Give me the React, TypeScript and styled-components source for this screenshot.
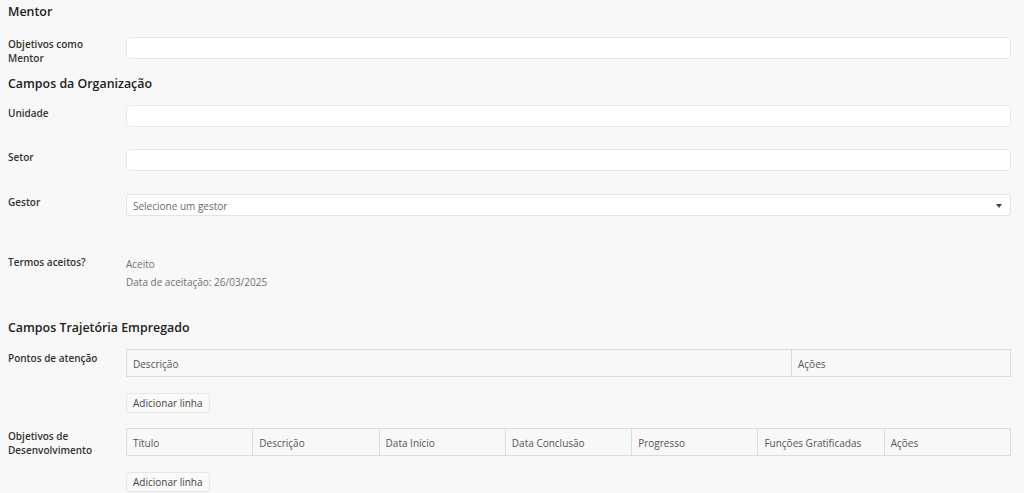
import React from 'react';
import styled, { createGlobalStyle } from 'styled-components';

const GlobalStyle = createGlobalStyle`
  html, body {
    margin: 0;
    padding: 0;
    background: #f8f8f8;
  }
  body {
    font-family: "Open Sans", "Noto Sans", Arial, sans-serif;
    color: #333;
  }
`;

const Page = styled.div`
  padding: 0 13px 0 8px;
  width: 1024px;
  box-sizing: border-box;
`;

const SectionTitle = styled.h2<{ $top?: number; $bottom?: number }>`
  margin: ${({ $top }) => $top ?? 0}px 0 ${({ $bottom }) => $bottom ?? 9}px;
  font-size: 12.4px;
  font-weight: 600;
  line-height: 24px;
  color: #222;
`;

const Row = styled.div<{ $bottom?: number }>`
  display: grid;
  grid-template-columns: 118px 1fr;
  align-items: start;
  margin-bottom: ${({ $bottom }) => $bottom ?? 22}px;
`;

const Label = styled.label<{ $offset?: number }>`
  font-size: 10px;
  font-weight: 600;
  line-height: 14px;
  color: #333;
  padding-top: ${({ $offset }) => $offset ?? 1}px;
  padding-right: 8px;
`;

const Input = styled.input`
  display: block;
  width: 100%;
  height: 22px;
  box-sizing: border-box;
  border: 1px solid #e8e8e8;
  border-radius: 4px;
  background: #fff;
  padding: 0 6px;
  font-family: inherit;
  font-size: 10px;
  outline: none;
`;

const SelectBox = styled.div`
  position: relative;
  display: flex;
  align-items: center;
  height: 22px;
  box-sizing: border-box;
  border: 1px solid #e3e3e3;
  border-radius: 3px;
  background: #fff;
  padding: 1px 6px 0;
  font-size: 10px;
  color: #6a6a6a;
`;

const Caret = styled.span`
  position: absolute;
  right: 8px;
  top: 9px;
  width: 0;
  height: 0;
  border-left: 3px solid transparent;
  border-right: 3px solid transparent;
  border-top: 4px solid #444;
`;

const Values = styled.div`
  padding-top: 1px;
`;

const ValueLine = styled.div`
  font-size: 10px;
  line-height: 18px;
  color: #6f6f6f;
`;

const Table = styled.table`
  width: 100%;
  border-collapse: collapse;
  table-layout: fixed;
`;

const Th = styled.th<{ $width?: string }>`
  width: ${({ $width }) => $width ?? 'auto'};
  height: 27px;
  box-sizing: border-box;
  border: 1px solid #dcdcdc;
  padding: 1px 6px 0;
  text-align: left;
  font-size: 10px;
  font-weight: 400;
  color: #555;
  white-space: nowrap;
`;

const AddButton = styled.button`
  display: block;
  margin-top: 16px;
  height: 20px;
  padding: 0 6px;
  border: 1px solid #e6e6e6;
  border-radius: 4px;
  background: #fafafa;
  font-family: inherit;
  font-size: 10px;
  color: #444;
`;

const devColumns = [
  'Título',
  'Descrição',
  'Data Início',
  'Data Conclusão',
  'Progresso',
  'Funções Gratificadas',
  'Ações',
];

export default function App() {
  return (
    <>
      <GlobalStyle />
      <Page>
        <SectionTitle $bottom={13}>Mentor</SectionTitle>
        <Row $bottom={7}>
          <Label $offset={0}>
            Objetivos como
            <br />
            Mentor
          </Label>
          <Input />
        </Row>

        <SectionTitle>Campos da Organização</SectionTitle>
        <Row>
          <Label>Unidade</Label>
          <Input />
        </Row>
        <Row $bottom={23}>
          <Label>Setor</Label>
          <Input />
        </Row>
        <Row $bottom={38}>
          <Label>Gestor</Label>
          <SelectBox>
            Selecione um gestor
            <Caret />
          </SelectBox>
        </Row>
        <Row $bottom={25}>
          <Label $offset={1}>Termos aceitos?</Label>
          <Values>
            <ValueLine>Aceito</ValueLine>
            <ValueLine>Data de aceitação: 26/03/2025</ValueLine>
          </Values>
        </Row>

        <SectionTitle>Campos Trajetória Empregado</SectionTitle>
        <Row $bottom={15}>
          <Label $offset={2}>Pontos de atenção</Label>
          <div>
            <Table>
              <thead>
                <tr>
                  <Th>Descrição</Th>
                  <Th $width="219px">Ações</Th>
                </tr>
              </thead>
            </Table>
            <AddButton>Adicionar linha</AddButton>
          </div>
        </Row>
        <Row $bottom={0}>
          <Label $offset={1}>
            Objetivos de
            <br />
            Desenvolvimento
          </Label>
          <div>
            <Table>
              <thead>
                <tr>
                  {devColumns.map((c) => (
                    <Th key={c}>{c}</Th>
                  ))}
                </tr>
              </thead>
            </Table>
            <AddButton>Adicionar linha</AddButton>
          </div>
        </Row>
      </Page>
    </>
  );
}
